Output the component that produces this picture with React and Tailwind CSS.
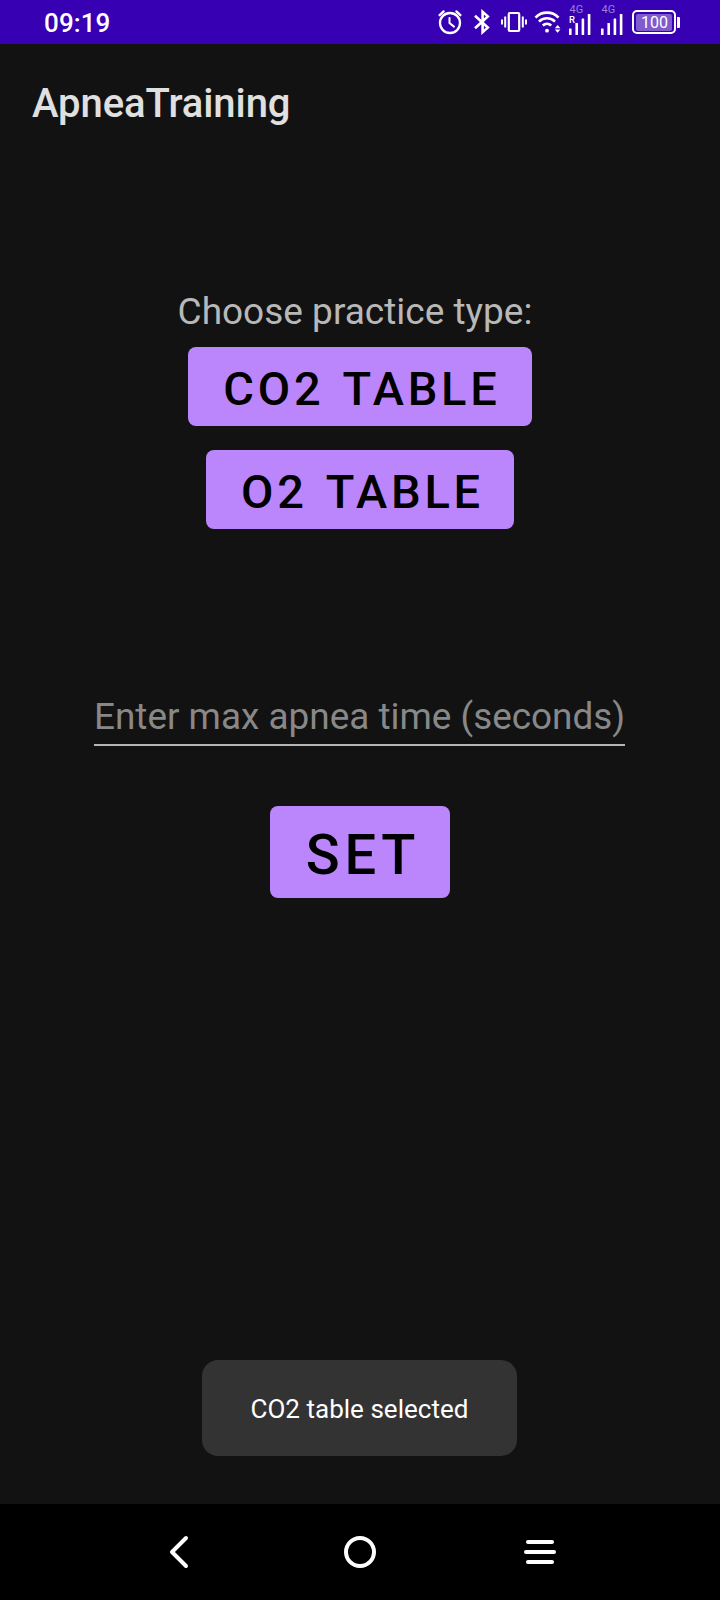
import React from "react";

function AlarmIcon() {
  return (
    <svg width="26" height="26" viewBox="0 0 26 26" fill="none" stroke="currentColor" strokeWidth="2.3" strokeLinecap="round">
      <circle cx="13" cy="14" r="10" />
      <path d="M12.5 9V14l4.5 3.6" strokeWidth="2" />
      <path d="M2.6 6.2L6.6 2.4M23.4 6.2L19.4 2.4" />
    </svg>
  );
}

function BluetoothIcon() {
  return (
    <svg width="18" height="26" viewBox="0 0 18 26" fill="none" stroke="currentColor" strokeWidth="2.6">
      <path d="M2 6.8L14.8 18.6L9.6 23.2V2.8L14.8 7.4L2 19.2" />
    </svg>
  );
}

function VibrateIcon() {
  return (
    <svg width="28" height="22" viewBox="0 0 28 22" fill="none" stroke="currentColor" strokeWidth="2.2">
      <rect x="8.8" y="2" width="10.4" height="18" rx="1" />
      <path d="M5.2 5.5v11M22.8 5.5v11M2 8.5v5M26 8.5v5" strokeWidth="2" />
    </svg>
  );
}

function WifiIcon() {
  return (
    <svg width="28" height="24" viewBox="0 0 28 24" fill="none" stroke="currentColor" strokeWidth="2.7">
      <path d="M1.5 7.6a16 16 0 0 1 23 0M5 11.6a11.2 11.2 0 0 1 16 0M8.8 15.4a6.2 6.2 0 0 1 8.4 0" />
      <circle cx="13" cy="20.7" r="1.9" fill="currentColor" stroke="none" />
      <path d="M20.8 18.2l2.8-3.2 2.8 3.2zM20.8 19.6l2.8 3.2 2.8-3.2z" fill="currentColor" stroke="none" />
    </svg>
  );
}

function Signal({ roaming = false }) {
  return (
    <div className="relative h-[44px] w-[22px]">
      <span className="absolute left-[0.5px] top-[4px] text-[11px] leading-[12px] text-[#9b7fdb]">4G</span>
      {roaming && <span className="absolute left-0 top-[14px] text-[9.5px] font-medium leading-[11px] text-white">R</span>}
      <svg className="absolute left-0 top-[14px]" width="22" height="21" viewBox="0 0 22 21" fill="currentColor">
        <rect x="0" y="14.5" width="2.6" height="6.5" rx="0.5" />
        <rect x="6.4" y="9" width="2.6" height="12" rx="0.5" />
        <rect x="12.6" y="4.5" width="2.6" height="16.5" rx="0.5" />
        <rect x="18.8" y="0" width="2.6" height="21" rx="0.5" />
      </svg>
    </div>
  );
}

function Battery() {
  return (
    <div className="flex items-center gap-px">
      <div className="flex h-[24px] w-[44px] items-center justify-center rounded-[5px] border-2 border-white">
        <span className="flex h-[17px] w-[36px] items-center justify-center rounded-[2px] bg-[#7f5bcd] pl-px text-[16px] leading-[17px]">100</span>
      </div>
      <div className="h-[11px] w-[2.5px] rounded-r-[1px] bg-white" />
    </div>
  );
}

function StatusBar() {
  return (
    <header className="flex h-[44px] shrink-0 items-center bg-[#3700b3] text-white">
      <span className="ml-[44px] w-[393px] pt-[2px] text-[26px] font-medium leading-[30px] tracking-[0.1px]">09:19</span>
      <div className="flex items-center">
        <AlarmIcon />
        <div className="ml-[10px]"><BluetoothIcon /></div>
        <div className="ml-[9px]"><VibrateIcon /></div>
        <div className="ml-[6px]"><WifiIcon /></div>
        <div className="ml-[7px]"><Signal roaming /></div>
        <div className="ml-[10px]"><Signal /></div>
        <div className="ml-[9px]"><Battery /></div>
      </div>
    </header>
  );
}

function NavBar() {
  return (
    <nav className="flex h-[96px] shrink-0 items-center justify-center gap-[148px] bg-black text-white">
      <svg width="32" height="36" viewBox="0 0 32 36" fill="none" stroke="currentColor" strokeWidth="4" strokeLinecap="round" strokeLinejoin="round">
        <path d="M22 4L8 18L22 32" />
      </svg>
      <svg width="32" height="32" viewBox="0 0 32 32" fill="none" stroke="currentColor" strokeWidth="4">
        <circle cx="16" cy="16" r="14" />
      </svg>
      <svg width="32" height="32" viewBox="0 0 32 32" fill="none" stroke="currentColor" strokeWidth="4" strokeLinecap="round">
        <path d="M4 6h24M2 16h28M4 26h24" />
      </svg>
    </nav>
  );
}

export default function App() {
  return (
    <div className="flex h-[1600px] w-[720px] flex-col overflow-hidden bg-[#121212] font-['Roboto',sans-serif]">
      <StatusBar />
      <h1 className="flex h-[116px] shrink-0 items-center pl-[32px] pt-[3px] text-[40px] font-medium leading-[48px] tracking-[-0.08px] text-[#e0e0e0]">
        ApneaTraining
      </h1>
      <main className="flex grow flex-col items-center">
        <p className="mr-[10px] mt-[128px] h-[59px] whitespace-nowrap pt-[3px] text-[37px] leading-[41px] text-[#b8b8b8]">
          Choose practice type:
        </p>
        <button className="h-[79px] w-[344px] whitespace-nowrap rounded-[8px] bg-[#bb86fc] pl-[4px] pt-[5px] text-[47px] font-medium leading-[56px] tracking-[3.8px] text-black [word-spacing:3.5px]">
          CO2 TABLE
        </button>
        <button className="mt-[24px] h-[79px] w-[308px] whitespace-nowrap rounded-[8px] bg-[#bb86fc] pl-[5px] pt-[5px] text-[47px] font-medium leading-[56px] tracking-[3.8px] text-black [word-spacing:3.5px]">
          O2 TABLE
        </button>
        <input
          className="mr-px mt-[159px] h-[58px] w-[531px] border-b-2 border-[#b5b5b5] bg-transparent text-[36.9px] leading-[44px] text-white outline-none placeholder:text-[#888888] placeholder:opacity-100"
          placeholder="Enter max apnea time (seconds)"
        />
        <button className="mt-[60px] h-[92px] w-[180px] rounded-[8px] bg-[#bb86fc] pl-[6px] pt-[6px] text-[56px] font-medium leading-[66px] tracking-[4.7px] text-black">
          SET
        </button>
        <div className="mr-px mt-auto mb-[48px] flex h-[96px] w-[315px] items-center justify-center rounded-[16px] bg-[#333333] pt-[2px] text-[26px] leading-[32px] tracking-[0.03px] text-white">
          CO2 table selected
        </div>
      </main>
      <NavBar />
    </div>
  );
}
